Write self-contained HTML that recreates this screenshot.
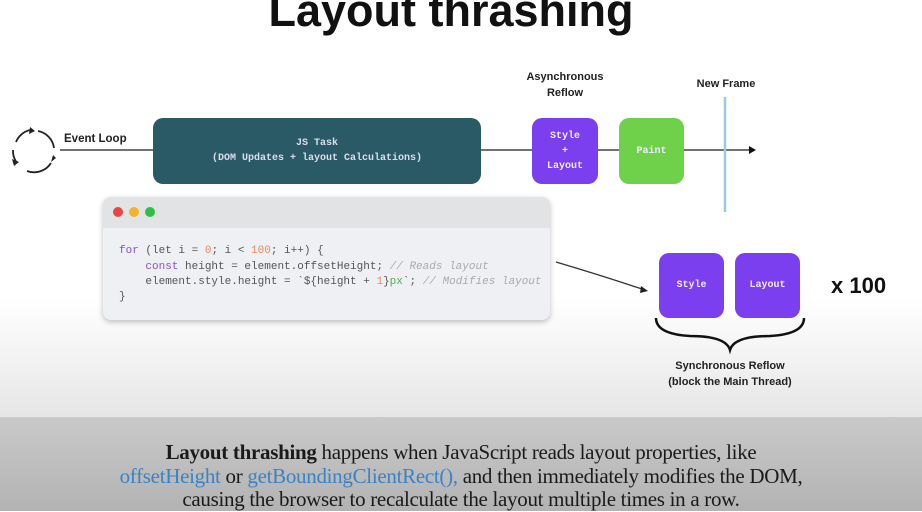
<!DOCTYPE html>
<html><head><style>
body{margin:0;width:922px;height:511px;overflow:hidden;position:relative;font-family:"Liberation Sans",sans-serif;background:linear-gradient(#fff 0,#fff 300px,#e6e6e6 415px);}
.a{position:absolute}
.box{position:absolute;border-radius:10px;color:#eef;font-family:"Liberation Mono",monospace;font-size:10px;font-weight:bold;display:flex;align-items:center;justify-content:center;text-align:center;line-height:15px}
.lbl{position:absolute;font-size:11px;font-weight:bold;color:#222;text-align:center}
.code{position:absolute;left:119px;font-family:"Liberation Mono",monospace;font-size:11px;color:#555;white-space:pre}
</style></head><body>
<div class="a" style="left:-10px;width:922px;top:-15px;text-align:center;font-size:45px;font-weight:bold;color:#111">Layout thrashing</div>

<svg class="a" style="left:0;top:0" width="922" height="420">
<line x1="60" y1="150" x2="752" y2="150" stroke="#444" stroke-width="1.5"/>
<polygon points="756,150 749,146 749,154" fill="#111"/>
<g fill="none" stroke="#222" stroke-width="1.8">
<path d="M16 142 A20 20 0 0 1 30 130"/>
<path d="M38 131 A20 20 0 0 1 54 148"/>
<path d="M51 163 A20 20 0 0 1 27 171"/>
<path d="M17 163 A20 20 0 0 1 13 150"/>
</g>
<polygon points="30,127 35,131 29,134" fill="#222"/>
<polygon points="56,158 51,162 53,155" fill="#222"/>
<polygon points="14,166 12,159 19,162" fill="#222"/>
<line x1="725" y1="97" x2="725" y2="212" stroke="#9cc9e6" stroke-width="2.5"/>
<path d="M556 262 Q600 275 645 290" fill="none" stroke="#333" stroke-width="1.3"/>
<polygon points="648,291 641,286 640,293" fill="#222"/>
<path d="M656 318 Q656 334 690 336 Q726 336 730 350 Q734 336 770 336 Q804 334 804 318" fill="none" stroke="#111" stroke-width="2.5"/>
</svg>

<div class="lbl" style="left:64px;top:133px;font-size:11.5px">Event Loop</div>
<div class="box" style="left:153px;top:118px;width:328px;height:66px;background:#2a5a66;color:#dde">JS Task<br>(DOM Updates + layout Calculations)</div>
<div class="lbl" style="left:510px;top:69px;width:110px;line-height:16px">Asynchronous<br>Reflow</div>
<div class="lbl" style="left:680px;top:78px;width:92px">New Frame</div>
<div class="box" style="left:532px;top:118px;width:66px;height:66px;background:#7b3ff0">Style<br>+<br>Layout</div>
<div class="box" style="left:619px;top:118px;width:65px;height:66px;background:#6fd14a">Paint</div>

<div class="a" style="left:103px;top:197px;width:447px;height:123px;border-radius:8px;background:#eef0f3;box-shadow:0 2px 6px rgba(0,0,0,.25);overflow:hidden">
<div style="height:31px;background:#e2e3e5"></div>
</div>
<div class="a" style="left:113px;top:207px;width:10px;height:10px;border-radius:50%;background:#e8463e"></div>
<div class="a" style="left:129px;top:207px;width:10px;height:10px;border-radius:50%;background:#f3b227"></div>
<div class="a" style="left:145px;top:207px;width:10px;height:10px;border-radius:50%;background:#2fbf45"></div>
<div class="code" style="top:245px"><span style="color:#8a4fd0">for</span> (let i = <span style="color:#e9895a">0</span>; i &lt; <span style="color:#e9895a">100</span>; i++) {</div>
<div class="code" style="top:261px">    <span style="color:#8a4fd0">const</span> height = element.offsetHeight; <i style="color:#aaa">// Reads layout</i></div>
<div class="code" style="top:276px">    element.style.height = `${height + <span style="color:#e9895a">1</span>}<span style="color:#4caf50">px</span>`; <i style="color:#aaa">// Modifies layout</i></div>
<div class="code" style="top:291px">}</div>

<div class="box" style="left:659px;top:253px;width:65px;height:65px;background:#7b3ff0">Style</div>
<div class="box" style="left:735px;top:253px;width:65px;height:65px;background:#7b3ff0">Layout</div>
<div class="a" style="left:831px;top:273px;font-size:22px;font-weight:bold;color:#111">x 100</div>
<div class="lbl" style="left:640px;top:358px;width:180px;line-height:16px">Synchronous Reflow<br>(block the Main Thread)</div>

<div class="a" style="left:0;top:417px;width:922px;height:94px;background:linear-gradient(#c9c9c9,#b3b3b3)"></div>
<div class="a" style="left:0;top:441px;width:922px;text-align:center;font-family:'Liberation Serif',serif;font-size:21px;line-height:23.5px;color:#1a1a1a;letter-spacing:-0.3px">
<b>Layout thrashing</b> happens when JavaScript reads layout properties, like<br>
<span style="color:#3b82c4">offsetHeight</span> or <span style="color:#3b82c4">getBoundingClientRect(),</span> and then immediately modifies the DOM,<br>
causing the browser to recalculate the layout multiple times in a row.</div>
</body></html>
